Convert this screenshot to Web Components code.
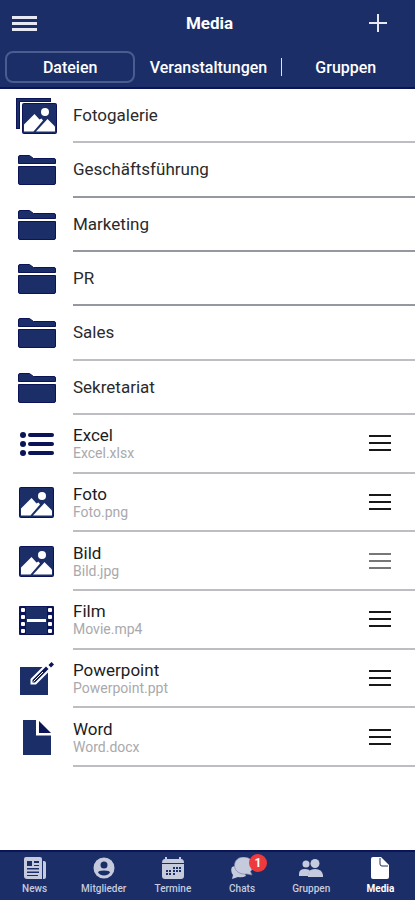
<!DOCTYPE html>
<html lang="de">
<head>
<meta charset="utf-8">
<meta name="viewport" content="width=device-width, initial-scale=1">
<title>Media</title>
<style>
  :root { --navy: #1b2e68; --navy-dark: #0b1456; --line: #bcbec2; }
  html, body { margin: 0; }
  body { font-family: Roboto, "Noto Sans", sans-serif; background: #fff; color: #2a2a2c; }
</style>
</head>
<body>
<media-app>
  <app-header slot="top" heading="Media">
    <view-tab current>Dateien</view-tab>
    <view-tab>Veranstaltungen</view-tab>
    <view-tab divided>Gruppen</view-tab>
  </app-header>
  <entry-list kind="folders">
    <folder-row icon="gallery">Fotogalerie</folder-row>
    <folder-row icon="folder" tone="dark">Geschäftsführung</folder-row>
    <folder-row icon="folder" tone="dark">Marketing</folder-row>
    <folder-row icon="folder" tone="dark">PR</folder-row>
    <folder-row icon="folder">Sales</folder-row>
    <folder-row icon="folder">Sekretariat</folder-row>
  </entry-list>
  <entry-list kind="files">
    <file-row icon="list" file="Excel.xlsx">Excel</file-row>
    <file-row icon="image" file="Foto.png">Foto</file-row>
    <file-row icon="image" file="Bild.jpg" faded>Bild</file-row>
    <file-row icon="film" file="Movie.mp4">Film</file-row>
    <file-row icon="edit" file="Powerpoint.ppt">Powerpoint</file-row>
    <file-row icon="page" file="Word.docx">Word</file-row>
  </entry-list>
  <bottom-bar slot="bottom">
    <bar-item icon="news">News</bar-item>
    <bar-item icon="person">Mitglieder</bar-item>
    <bar-item icon="calendar">Termine</bar-item>
    <bar-item icon="chat" badge="1">Chats</bar-item>
    <bar-item icon="people">Gruppen</bar-item>
    <bar-item icon="doc" current>Media</bar-item>
  </bottom-bar>
</media-app>

<script>
const picture = (x, y) => `<g transform="translate(${x} ${y})"><rect width="35" height="31" rx="2" fill="#0b1456"/><rect x="1" y="1" width="33" height="29" rx="1" fill="#1b2e68"/><circle cx="23" cy="9" r="4" fill="#fff"/><path d="M2 28.500V21.500L12.500 11l5 5.500 2-1 1.500 2L11.500 28.500z" fill="#fff"/><path d="M14 28.500L25.500 16l7.500 7.500v5z" fill="#fff"/></g>`;
const ICONS = {
  gallery: [41, 36, `<path d="M0 0h35v4H4v27H0z" fill="#0b1456"/><path d="M1 1h33v2H3v27H1z" fill="#1b2e68"/>` + picture(6, 5)],
  folder: [38, 30, `<g fill="#1b2e68" stroke="#0b1456"><path d="M.5 8.500V2Q.5.5 2 .5h9.500l4 3H36q1.500 0 1.500 1.500v3.500z"/><path d="M.5 11.500h37V28q0 1.500-1.500 1.500H2Q.5 29.500.5 28z"/></g>`],
  list: [34, 24, `<g fill="#0b1456"><circle cx="3" cy="3" r="3"/><circle cx="3" cy="12" r="3"/><circle cx="3" cy="21" r="3"/><rect x="8" y="1" width="26" height="4" rx="2"/><rect x="8" y="10" width="26" height="4" rx="2"/><rect x="8" y="19" width="26" height="4" rx="2"/></g>`],
  image: [35, 31, picture(0, 0)],
  film: [35, 29, `<rect width="35" height="29" rx="1" fill="#0b1456"/><path d="M7 1h21v27H7z" fill="#1b2e68"/><g fill="#fff"><rect x="2" y="2" width="4" height="4" rx="1"/><rect x="2" y="9" width="4" height="4" rx="1"/><rect x="2" y="16" width="4" height="4" rx="1"/><rect x="2" y="23" width="4" height="4" rx="1"/><rect x="29" y="2" width="4" height="4" rx="1"/><rect x="29" y="9" width="4" height="4" rx="1"/><rect x="29" y="16" width="4" height="4" rx="1"/><rect x="29" y="23" width="4" height="4" rx="1"/><rect x="8" y="13" width="19" height="3"/></g>`],
  edit: [34, 34, `<path d="M0 5h28v28H0z" fill="#1b2e68"/><path d="M10.500 22.500v-5.500L26 1.500 31.500 7 16 22.500z" fill="#fff"/><path d="M12.500 20.500v-2.500L26 4.500l2.500 2.500L15 20.500z" fill="#0b1456"/><path d="M13.500 19.500L23 10" stroke="#fff" stroke-width="1"/><path d="M28.500 3l3-3L34 2.500l-3 3z" fill="#0b1456"/>`],
  page: [28, 35, `<path d="M0 0h13v15.500h15V35H0z" fill="#1b2e68"/><path d="M16 1l12 12H16z" fill="#0b1456"/>`],
  news: [22, 22, `<path d="M2 0h14q2 0 2 2v20H3q-3 0-3-3V2q0-2 2-2z" fill="currentColor"/><path d="M19 4h1q2 0 2 2v14q0 2-2 2h-1z" fill="currentColor"/><path d="M3 4h5v5H3zM10 4h5v2h-5zM10 8h5v1h-5zM3 11h12v1.500H3zM3 14.500h12V16H3zM3 18h11v1H3z" fill="#1b2e68"/>`],
  person: [22, 22, `<circle cx="11" cy="11" r="10.500" fill="currentColor"/><circle cx="11" cy="8" r="3.500" fill="#1b2e68"/><path d="M5 15.500q0-2 6-2t6 2q-2 3-6 3t-6-3z" fill="#1b2e68"/>`],
  calendar: [24, 22, `<path d="M4 0h2v2h12V0h2v2q3 0 3 4H1q0-4 3-4zM1 7h22v12q0 3-3 3H4q-3 0-3-3z" fill="currentColor"/><path d="M12 10h2v2h-2zM15 10h2v2h-2zM18 10h2v2h-2zM5 13h2v2H5zM8 13h2v2H8zM12 13h2v2h-2zM15 13h2v2h-2zM18 13h2v2h-2zM5 16h2v2H5zM8 16h2v2H8zM12 16h2v2h-2z" fill="#1b2e68"/>`],
  chat: [22, 22, `<path d="M1 10q5-3 9 2t5 7q-4 2-8 1l-6 2 1-4q-3-4-1-8z" fill="currentColor"/><path d="M12.500 0c5.500 0 9.500 3.500 9.500 8.500 0 3-1 4.500-2.500 6l1.500 3.500-5-1c-7 1-12.500-3-12.500-8.500C3.500 3.500 7.500 0 12.500 0z" fill="currentColor" stroke="#7a84a8" stroke-width=".7"/>`],
  people: [24, 18, `<g fill="currentColor"><circle cx="7" cy="5" r="3.500"/><path d="M0 17v-2q0-5 6-5 4 0 5 2-2 2-2 5z"/><circle cx="16" cy="4.500" r="4.500"/><path d="M9 18v-2q0-6 7-6t8 6v2z"/></g>`],
  doc: [18, 22, `<path d="M2 0h8l8 8v12q0 2-2 2H2q-2 0-2-2V2q0-2 2-2z" fill="currentColor"/><path d="M9 1v6q0 2 2 2h6" fill="none" stroke="#1b2e68"/>`],
  menu: [25, 15, `<path d="M0 0h25v3H0zM0 6h25v3H0zM0 12h25v3H0z" fill="currentColor"/>`],
  plus: [18, 18, `<path d="M8 0h2v8h8v2h-8v8H8v-8H0V8h8z" fill="currentColor"/>`],
  handle: [22, 16, `<path d="M0 0h22v2H0zM0 7h22v2H0zM0 14h22v2H0z" fill="currentColor"/>`]
};

class Base extends HTMLElement {
  connectedCallback() {
    if (!this.shadowRoot) this.attachShadow({ mode: "open" }).innerHTML = this.view();
  }
  get(name) { return this.getAttribute(name) || ""; }
}

customElements.define("app-icon", class extends Base {
  view() {
    const [w, h, body] = ICONS[this.get("name")];
    return `<style>:host{display:block;flex:none}svg{display:block}</style>
      <svg width="${w}" height="${h}" viewBox="0 0 ${w} ${h}" aria-hidden="true">${body}</svg>`;
  }
});

customElements.define("media-app", class extends Base {
  view() {
    return `<style>
      :host{display:flex;flex-direction:column;min-height:100vh}
      main{flex:1}
    </style><slot name="top"></slot><main><slot></slot></main><slot name="bottom"></slot>`;
  }
});

customElements.define("app-header", class extends Base {
  view() {
    return `<style>
      :host{display:block;background:var(--navy);color:#fff;border-bottom:2px solid var(--navy-dark)}
      .bar{display:grid;grid-template-columns:1fr auto 1fr;align-items:center;height:46px;padding:0 28px 0 12px}
      .bar app-icon{color:#e6e9f4}
      h1{margin:0;font-size:17px;line-height:24px;font-weight:700;padding-left:20px}
      button{background:none;border:0;padding:0;color:inherit;justify-self:start}
      button:last-child{justify-self:end}
      nav{display:grid;grid-template-columns:repeat(3,1fr);padding:5px 0 4px}
    </style>
    <div class="bar">
      <button type="button" aria-label="Menü"><app-icon name="menu"></app-icon></button>
      <h1>${this.get("heading")}</h1>
      <button type="button" aria-label="Hinzufügen"><app-icon name="plus"></app-icon></button>
    </div>
    <nav><slot></slot></nav>`;
  }
});

customElements.define("view-tab", class extends Base {
  view() {
    return `<style>
      :host{display:flex;align-items:center;padding:0 3px 0 5px}
      :host([divided])::before{content:"";width:1px;height:18px;background:#dfe2ee}
      :host([divided]){padding:0 5px 0 4px}
      button{flex:1;height:32px;border:2px solid transparent;border-radius:8px;background:none;color:#fff;
        font:500 16px/24px Roboto,"Noto Sans",sans-serif;padding:1px 0 0;white-space:nowrap}
      :host([current]) button{border-color:#4a5d8e}
    </style><button type="button"><slot></slot></button>`;
  }
});

customElements.define("entry-list", class extends Base {
  view() {
    return `<style>
      :host{display:grid;grid-auto-rows:1fr}
      :host([kind=folders]){min-height:326px}
      :host([kind=files]){min-height:352px}
    </style><slot></slot>`;
  }
});

const ROW = `
  :host{display:grid;grid-template-columns:73px 1fr}
  .icon{display:flex;justify-content:center;align-items:center}
  .body{display:flex;align-items:center;border-bottom:2px solid var(--line)}
  :host([tone=dark]) .body{border-color:#96989f}
  a{flex:1;color:inherit;text-decoration:none;font-size:17px;line-height:20px}`;

customElements.define("folder-row", class extends Base {
  view() {
    return `<style>${ROW}</style>
      <div class="icon"><app-icon name="${this.get("icon")}"></app-icon></div>
      <div class="body"><a href="#"><slot></slot></a></div>`;
  }
});

customElements.define("file-row", class extends Base {
  view() {
    return `<style>${ROW}
      a{color:#1c1c1e}
      small{display:block;font-size:14px;line-height:16px;color:#a9a9ac}
      button{border:0;background:none;padding:8px 24px;color:#18181a}
      :host([faded]) button{color:#77777a}
    </style>
    <div class="icon"><app-icon name="${this.get("icon")}"></app-icon></div>
    <div class="body"><a href="#"><slot></slot><small>${this.get("file")}</small></a>
      <button type="button" aria-label="Optionen"><app-icon name="handle"></app-icon></button></div>`;
  }
});

customElements.define("bottom-bar", class extends Base {
  view() {
    return `<style>
      :host{display:block;background:var(--navy);border-top:2px solid var(--navy-dark)}
      nav{display:grid;grid-template-columns:repeat(6,1fr);padding:4px 0}
    </style><nav><slot></slot></nav>`;
  }
});

customElements.define("bar-item", class extends Base {
  view() {
    const badge = this.get("badge");
    return `<style>
      :host{display:block;color:#c5cbdd}
      :host([current]){color:#fff}
      a{display:flex;flex-direction:column;align-items:center;color:inherit;text-decoration:none;
        font-size:10px;line-height:14px;font-weight:500;gap:2px}
      :host([current]) a{font-weight:700}
      .icon{position:relative;height:24px;display:flex;align-items:center}
      .badge{position:absolute;left:18px;top:-2px;width:18px;height:18px;border-radius:50%;background:#ee3a3d;
        color:#fff;font-size:12px;line-height:18px;font-weight:700;text-align:center}
    </style>
    <a href="#"><span class="icon"><app-icon name="${this.get("icon")}"></app-icon>${badge ? `<span class="badge">${badge}</span>` : ""}</span><span><slot></slot></span></a>`;
  }
});
</script>
</body>
</html>
